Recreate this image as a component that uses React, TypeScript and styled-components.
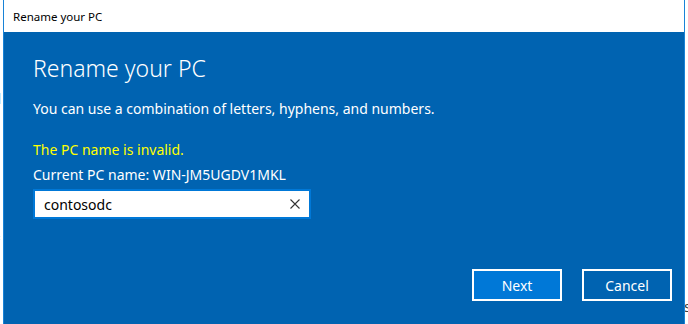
import styled, { createGlobalStyle } from "styled-components";

const GlobalStyle = createGlobalStyle`
  html, body {
    margin: 0;
    padding: 0;
    background: #ffffff;
    overflow: hidden;
  }
  body {
    font-family: "Noto Sans", "Open Sans", "Liberation Sans", sans-serif;
  }
`;

const Desktop = styled.div`
  position: relative;
  width: 688px;
  height: 324px;
  overflow: hidden;
  background: #ffffff;
`;

const BackText = styled.div<{ $left: number }>`
  position: absolute;
  top: 0;
  left: ${(p) => p.$left}px;
  width: 30px;
  height: 324px;
  font-size: 15px;
  color: #3c3c3c;
  line-height: 20px;
`;

const BackLine = styled.div<{ $top: number }>`
  position: absolute;
  top: ${(p) => p.$top}px;
  left: 0;
`;

const Window = styled.div`
  position: absolute;
  left: 3px;
  top: -1px;
  width: 680px;
  height: 324px;
  border: 1px solid #1883d7;
  display: flex;
  flex-direction: column;
  background: #0063b1;
`;

const TitleBar = styled.div`
  height: 32px;
  background: #ffffff;
  display: flex;
  align-items: center;
  padding-left: 9px;
  font-size: 11.5px;
  color: #000000;
`;

const Body = styled.div`
  flex: 1;
  display: flex;
  flex-direction: column;
  padding: 20px 12px 0 29px;
  color: #ffffff;
`;

const Heading = styled.div`
  font-size: 23px;
  font-weight: 300;
  line-height: 32px;
  margin-bottom: 15px;
`;

const Line = styled.div<{ $warn?: boolean }>`
  font-size: 14px;
  line-height: 20px;
  color: ${(p) => (p.$warn ? "#ffff00" : "#ffffff")};
`;

const Gap = styled.div<{ $h: number }>`
  height: ${(p) => p.$h}px;
`;

const Input = styled.div`
  box-sizing: border-box;
  width: 278px;
  height: 30px;
  margin-top: 4px;
  border: 2px solid #0078d7;
  background: #ffffff;
  display: flex;
  align-items: center;
  justify-content: space-between;
  padding: 0 9px;
  font-size: 14px;
  color: #000000;
`;

const Buttons = styled.div`
  margin-top: auto;
  margin-bottom: 23px;
  display: flex;
  justify-content: flex-end;
  gap: 20px;
`;

const Button = styled.div<{ $primary?: boolean }>`
  box-sizing: border-box;
  width: 90px;
  height: 32px;
  border: 2px solid #ffffff;
  background: ${(p) => (p.$primary ? "#0078d7" : "transparent")};
  color: #ffffff;
  font-size: 14px;
  display: flex;
  align-items: center;
  justify-content: center;
`;

const ClearIcon = () => (
  <svg width="10" height="10" viewBox="0 0 10 10">
    <path d="M0.5 0.5 L9.5 9.5 M9.5 0.5 L0.5 9.5" stroke="#333" strokeWidth="1.1" />
  </svg>
);

export default function App() {
  return (
    <Desktop>
      <GlobalStyle />
      <BackText $left={-8}>
        <BackLine $top={14}>l</BackLine>
        <BackLine $top={46}>(</BackLine>
        <BackLine $top={88}>d</BackLine>
        <BackLine $top={150}>t</BackLine>
        <BackLine $top={227}>=</BackLine>
        <BackLine $top={275}>f</BackLine>
      </BackText>
      <BackText $left={684}>
        <BackLine $top={296}>s</BackLine>
      </BackText>
      <Window>
        <TitleBar>Rename your PC</TitleBar>
        <Body>
          <Heading>Rename your PC</Heading>
          <Line>You can use a combination of letters, hyphens, and numbers.</Line>
          <Gap $h={21} />
          <Line $warn>The PC name is invalid.</Line>
          <Gap $h={5} />
          <Line>Current PC name: WIN-JM5UGDV1MKL</Line>
          <Input>
            <span>contosodc</span>
            <ClearIcon />
          </Input>
          <Buttons>
            <Button $primary>Next</Button>
            <Button>Cancel</Button>
          </Buttons>
        </Body>
      </Window>
    </Desktop>
  );
}
